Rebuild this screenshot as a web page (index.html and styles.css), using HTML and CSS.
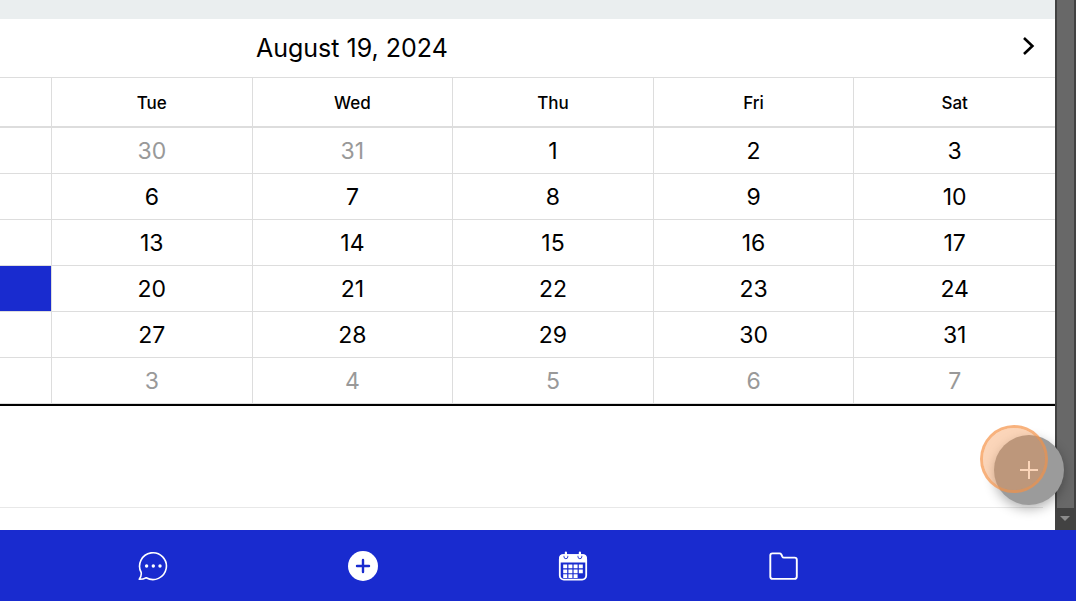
FILE: index.html
```html
<!DOCTYPE html>
<html lang="en">
<head>
    <meta charset="UTF-8">
    <meta name="viewport" content="width=device-width, initial-scale=1.0">
    <title>Calendar</title>
    <link rel="stylesheet" href="styles.css">
</head>

<body>
    <div class="page">
        <main class="content">
            <div class="top-strip"></div>

            <!-- Calendar -->
            <section class="calendar">
                <header class="calendar-header">
                    <h1 class="calendar-title">August 19, 2024</h1>
                    <button class="next-btn" type="button" aria-label="Next month">
                        <svg width="14" height="20" viewBox="0 0 14 20" fill="none" stroke="#000" stroke-width="2.6"><path d="M3 2l8.4 8L3 18"/></svg>
                    </button>
                </header>

                <table class="calendar-table">
                    <thead>
                        <tr><th class="edge"></th><th>Tue</th><th>Wed</th><th>Thu</th><th>Fri</th><th>Sat</th></tr>
                    </thead>
                    <tbody>
                        <tr><td></td><td class="muted">30</td><td class="muted">31</td><td>1</td><td>2</td><td>3</td></tr>
                        <tr><td></td><td>6</td><td>7</td><td>8</td><td>9</td><td>10</td></tr>
                        <tr><td></td><td>13</td><td>14</td><td>15</td><td>16</td><td>17</td></tr>
                        <tr><td class="selected"></td><td>20</td><td>21</td><td>22</td><td>23</td><td>24</td></tr>
                        <tr><td></td><td>27</td><td>28</td><td>29</td><td>30</td><td>31</td></tr>
                        <tr><td></td><td class="muted">3</td><td class="muted">4</td><td class="muted">5</td><td class="muted">6</td><td class="muted">7</td></tr>
                    </tbody>
                </table>
            </section>

            <div class="events"></div>
        </main>

        <div class="scrollbar">
            <div class="scroll-thumb"></div>
            <div class="scroll-arrow"></div>
        </div>

        <button class="add-btn" type="button" aria-label="Add event">
            <svg width="18" height="18" viewBox="0 0 18 18" stroke="#fff" stroke-width="2"><path d="M9 0v18M0 9h18"/></svg>
        </button>
        <span class="click-mark"></span>
    </div>

    <!-- Bottom navigation -->
    <nav class="navbar">
        <a href="#" aria-label="Messages">
            <svg width="30" height="30" viewBox="0 0 30 30" fill="none" stroke="#fff" stroke-width="1.6" stroke-linejoin="round">
                <path d="M3.2 21.5A13.4 13.4 0 1 1 8.2 26.7Q5 28.4 1.2 28.3Q3.7 25.6 3.2 21.5z"/>
                <g fill="#fff" stroke="none"><circle cx="8.6" cy="15" r="1.7"/><circle cx="15.3" cy="15" r="1.7"/><circle cx="22" cy="15" r="1.7"/></g>
            </svg>
        </a>
        <a href="#" aria-label="Add">
            <svg width="30" height="30" viewBox="0 0 30 30">
                <circle cx="15" cy="15" r="15" fill="#fff"/>
                <path d="M15 9v12M9 15h12" stroke="#192bcf" stroke-width="2.4" stroke-linecap="round"/>
            </svg>
        </a>
        <a href="#" aria-label="Calendar">
            <svg width="30" height="30" viewBox="0 0 30 30" fill="none">
                <rect x="1.8" y="4.2" width="26.4" height="24.4" rx="4" stroke="#fff" stroke-width="1.8"/>
                <path d="M1 11.5v-4Q1 3.2 5 3.2h20q4 0 4 4.3v4z" fill="#fff"/>
                <path d="M6 4.8v1a1.9 1.9 0 0 0 3.8 0v-1M20 4.8v1a1.9 1.9 0 0 0 3.8 0v-1" stroke="#192bcf" stroke-width=".9"/>
                <path d="M7.9 1.6v3.6M21.9 1.6v3.6" stroke="#fff" stroke-width="2.2" stroke-linecap="round"/>
                <path d="M5.2 15.4h19.6M5.2 20.4h19.6M5.2 25.2h14.4" stroke="#fff" stroke-width="3.8" stroke-dasharray="4 1.2"/>
            </svg>
        </a>
        <a href="#" aria-label="Files">
            <svg width="30" height="30" viewBox="0 0 30 30" fill="none" stroke="#fff" stroke-width="1.9" stroke-linejoin="round">
                <path d="M1.3 25.5V4.6q0-2.2 2.2-2.2h7q1.2 0 1.8 1l1 2.2q.5 1 1.7 1h10.6q2.2 0 2.2 2.2v16.7q0 2.4-2.4 2.4H3.5q-2.2 0-2.2-2.4z"/>
            </svg>
        </a>
    </nav>
</body>

</html>
```
FILE: styles.css
```css
* {
    margin: 0;
    padding: 0;
    box-sizing: border-box;
}

body {
    display: flex;
    flex-direction: column;
    min-height: 100vh;
    background-color: #fff;
    color: #000;
    font-family: 'Inter', sans-serif;
}

button {
    border: none;
    background-color: transparent;
    cursor: pointer;
}

.page {
    display: flex;
    flex: 1;
    position: relative;
    overflow: hidden;
}

.content {
    flex: 1;
    display: flex;
    flex-direction: column;
}

.top-strip {
    height: 19px;
    background-color: #eaeeef;
}

/* Calendar */
.calendar {
    border-bottom: 2px solid #000;
}

.calendar-header {
    display: flex;
    align-items: center;
    justify-content: space-between;
    height: 59px;
    padding-right: 20px;
    border-bottom: 1px solid #ddd;
}

.calendar-title {
    width: 68%;
    text-align: center;
    font-size: 25px;
    font-weight: 400;
}

.next-btn {
    display: flex;
    padding-bottom: 4px;
}

.calendar-table {
    width: 100%;
    table-layout: fixed;
    border-collapse: separate;
    border-spacing: 0;
}

.calendar-table th,
.calendar-table td {
    border-right: 1px solid #ddd;
    border-bottom: 1px solid #ddd;
    text-align: center;
    vertical-align: middle;
}

.calendar-table th:last-child,
.calendar-table td:last-child {
    border-right: none;
}

.calendar-table th {
    height: 50px;
    padding-top: 2px;
    border-bottom-width: 2px;
    font-size: 17px;
    font-weight: 500;
}

.calendar-table .edge {
    width: 52px;
}

.calendar-table td {
    height: 46px;
    padding-top: 1px;
    font-size: 23px;
    font-weight: 400;
}

.calendar-table .muted {
    color: #999;
}

.calendar-table .selected {
    background-color: #192bcf;
    background-clip: padding-box;
}

.events {
    flex: 1;
    min-height: 102px;
    margin-right: 12px;
    margin-bottom: 22px;
    border-bottom: 1px solid #e8e8e8;
}

/* Scrollbar */
.scrollbar {
    display: flex;
    flex-direction: column;
    width: 21px;
    padding: 0 2px;
    background-color: #424242;
}

.scroll-thumb {
    flex: 1;
    background-color: #686868;
}

.scroll-arrow {
    height: 22px;
    padding: 8px 3px;
}

.scroll-arrow::before {
    content: "";
    display: block;
    width: 0;
    border-left: 5px solid transparent;
    border-right: 5px solid transparent;
    border-top: 5px solid #8c8c8c;
}

/* Floating button */
.add-btn {
    position: absolute;
    right: 12px;
    bottom: 25px;
    display: flex;
    align-items: center;
    justify-content: center;
    width: 70px;
    height: 70px;
    border-radius: 50%;
    background-color: #9b9b9b;
    box-shadow: 0 4px 12px rgba(0, 0, 0, 0.3);
}

.click-mark {
    position: absolute;
    right: 28px;
    bottom: 37px;
    width: 68px;
    height: 68px;
    border: 3px solid rgba(245, 145, 70, 0.7);
    border-radius: 50%;
    background-color: rgba(245, 145, 70, 0.38);
    background-clip: padding-box;
    pointer-events: none;
}

/* Bottom navigation */
.navbar {
    display: grid;
    grid-template-columns: repeat(4, 1fr);
    height: 71px;
    padding: 0 17.4% 0 4.4%;
    background-color: #192bcf;
}

.navbar a {
    display: flex;
    align-items: center;
    justify-content: center;
}
```
